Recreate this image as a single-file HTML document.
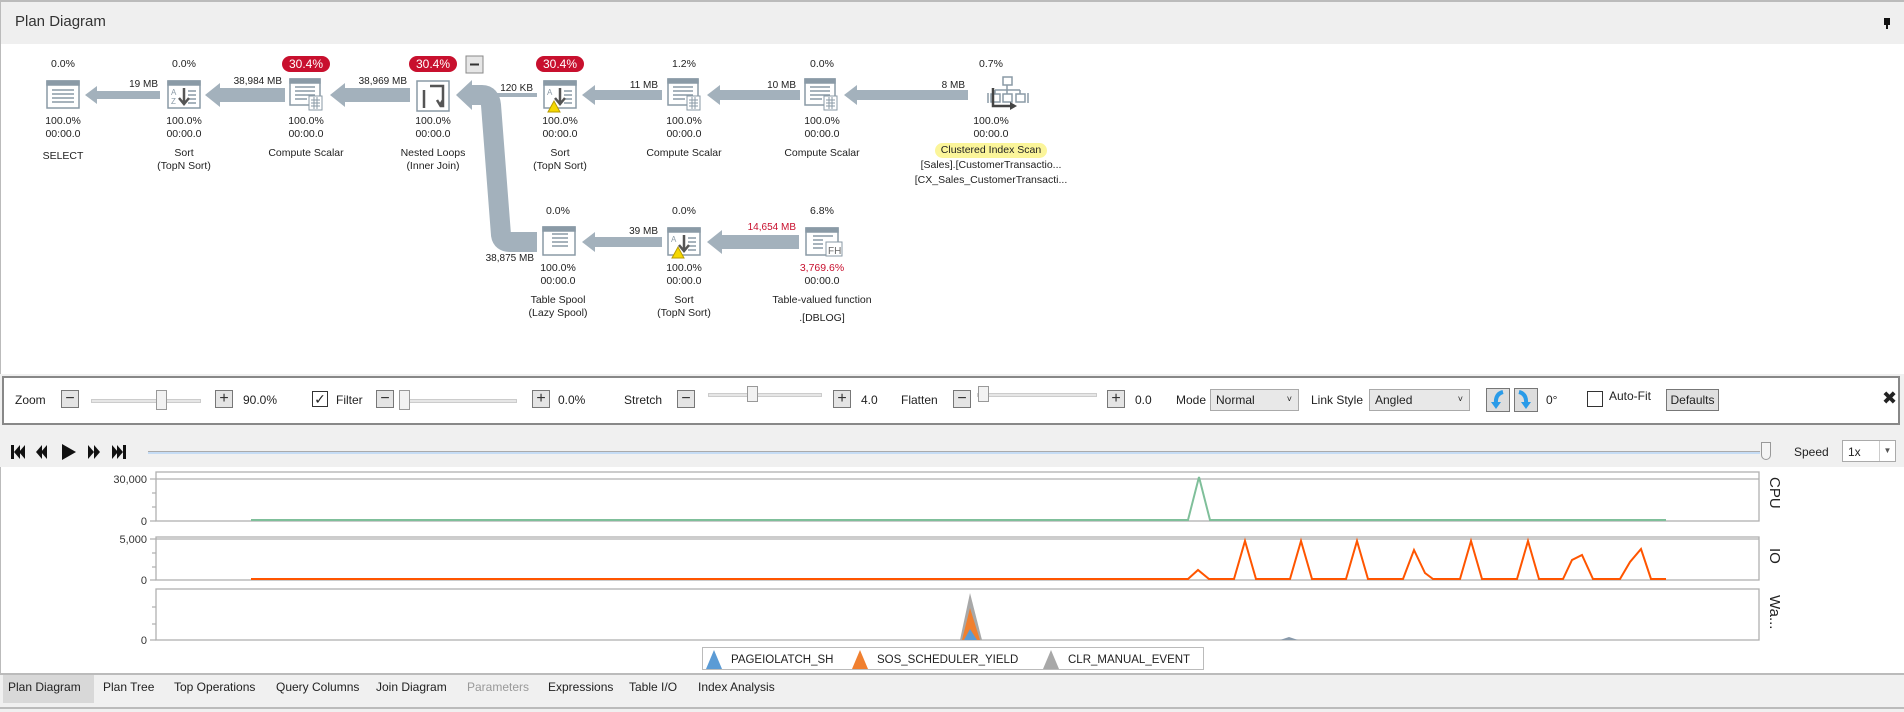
<!DOCTYPE html>
<html><head><meta charset="utf-8"><style>
*{margin:0;padding:0;box-sizing:border-box}
body{width:1904px;height:712px;overflow:hidden;background:#f0f0f0;font-family:"Liberation Sans","DejaVu Sans",sans-serif;font-size:11px;color:#222;position:relative}
.a{position:absolute;white-space:nowrap}
.c{position:absolute;text-align:center;width:160px;white-space:nowrap;line-height:13px;font-size:10.5px}
.pill{display:inline-block;background:#c8102e;color:#fff;border-radius:9px;padding:0 7px;font-size:12px;line-height:16px}
.btn{position:absolute;width:18px;height:18px;border:1px solid #777;background:#e4e4e4;font-size:16px;line-height:15px;text-align:center;color:#333}
.trk{position:absolute;height:4px;background:#e6e6e6;border:1px solid #ccc}
.thumb{position:absolute;width:11px;height:20px;background:#f2f2f2;border:1px solid #999}
.sel{position:absolute;height:22px;border:1px solid #aaa;background:#e8e8e8;font-size:12px;padding:3px 5px}
.tab{position:absolute;top:680px;font-size:12px}
</style></head><body>
<div class="a" style="left:0;top:0;width:1904px;height:44px;background:#efefef;border-top:2px solid #bbb;border-left:1px solid #bbb"></div>
<div class="a" style="left:15px;top:13px;font-size:15px;color:#333">Plan Diagram</div>
<div class="a" style="left:1884px;top:18px;width:6px;height:7px;background:#111"></div>
<div class="a" style="left:1886px;top:25px;width:2px;height:4px;background:#111"></div>
<div class="a" style="left:0;top:44px;width:1904px;height:330px;background:#fff;border-left:1px solid #bbb"></div>

<svg class="a" style="left:0;top:0" width="1904" height="374">
<g fill="#a3b1bc">
<polygon points="85,95 97,86 97,91 160,91 160,99 97,99 97,104"/>
<polygon points="205,95 220,83 220,88 285,88 285,102 220,102 220,107"/>
<polygon points="330,95 345,83 345,88 410,88 410,102 345,102 345,107"/>
<polygon points="486,95 490,93 537,93 537,97 490,97"/>
<polygon points="582,95 595,85 595,90 662,90 662,100 595,100 595,105"/>
<polygon points="707,95 720,85 720,90 800,90 800,100 720,100 720,105"/>
<polygon points="844,95 857,85 857,90 968,90 968,100 857,100 857,105"/>
<polygon points="582,242 595,232 595,237 662,237 662,247 595,247 595,252"/>
<polygon points="707,242 722,230 722,235 799,235 799,249 722,249 722,254"/>
<polygon points="456,95 472,80 472,110"/>
</g>
<path d="M470 95 L482 95 Q490 95 491 105 L501 235 Q502 242 510 242 L537 242" fill="none" stroke="#a3b1bc" stroke-width="20" stroke-linejoin="round"/>
<g fill="none" stroke="#8a9aa6" stroke-width="1.5">
<rect x="47" y="81" width="32" height="27" fill="#fff"/><rect x="47" y="81" width="32" height="4" fill="#8a9aa6"/>
<rect x="168" y="81" width="32" height="27" fill="#fff"/><rect x="168" y="81" width="32" height="4" fill="#8a9aa6"/>
<rect x="290" y="79" width="30" height="26" fill="#fff"/><rect x="290" y="79" width="30" height="4" fill="#8a9aa6"/>
<rect x="417" y="81" width="32" height="30" fill="#fff"/>
<rect x="544" y="81" width="32" height="27" fill="#fff"/><rect x="544" y="81" width="32" height="4" fill="#8a9aa6"/>
<rect x="668" y="79" width="30" height="26" fill="#fff"/><rect x="668" y="79" width="30" height="4" fill="#8a9aa6"/>
<rect x="805" y="79" width="30" height="26" fill="#fff"/><rect x="805" y="79" width="30" height="4" fill="#8a9aa6"/>
<rect x="543" y="227" width="32" height="28" fill="#fff"/><rect x="543" y="227" width="32" height="4" fill="#8a9aa6"/>
<rect x="668" y="228" width="32" height="27" fill="#fff"/><rect x="668" y="228" width="32" height="4" fill="#8a9aa6"/>
<rect x="806" y="228" width="32" height="27" fill="#fff"/><rect x="806" y="228" width="32" height="4" fill="#8a9aa6"/>
</g>
<g stroke="#8a9aa6" stroke-width="1.5">
<path d="M52 90h22M52 94h22M52 98h22M52 102h22"/>
<path d="M188 91h8M188 95h8M188 99h8M188 103h8M564 91h8M564 95h8M564 99h8M564 103h8M688 238h8M688 242h8M688 246h8M688 250h8"/>
<path d="M295 87h20M295 91h20M295 95h20M295 99h12"/><path d="M673 87h20M673 91h20M673 95h20M673 99h12"/><path d="M810 87h20M810 91h20M810 95h20M810 99h12"/>
<path d="M813 236h20M813 240h10M813 244h10M813 248h10"/>
<path d="M552 234h16M552 238h16M552 242h16M552 246h16"/>
</g>
<g font-family="Liberation Sans" font-size="8" fill="#8a9aa6"><text x="171" y="95">A</text><text x="171" y="104">Z</text><text x="547" y="95">A</text><text x="671" y="242">A</text></g>
<g fill="#fff" stroke="#8a9aa6"><rect x="309" y="96" width="13" height="14"/><rect x="687" y="96" width="13" height="14"/><rect x="824" y="96" width="13" height="14"/><rect x="826" y="242" width="16" height="14"/></g>
<g stroke="#8a9aa6" stroke-width="1"><path d="M311 100h9M311 103h9M311 106h9M314 97v12M317 97v12M689 100h9M689 103h9M689 106h9M692 97v12M695 97v12M826 100h9M826 103h9M826 106h9M829 97v12M832 97v12"/></g>
<text x="828" y="254" font-size="10" fill="#666" font-family="Liberation Sans">FH</text>
<g stroke="#555" stroke-width="2.5" fill="none">
<path d="M184 88v14M179 98l5 6 5-6M560 88v14M555 98l5 6 5-6M684 235v14M679 245l5 6 5-6"/>
<path d="M424 90v18M430 86h13v20h-3M437 100l3 5 3-5"/>
</g>
<g fill="none" stroke="#8a9aa6" stroke-width="1.5">
<rect x="1003" y="77" width="9" height="8"/>
<path d="M1007 85v5M995 90h25M995 90v4M1007 90v4M1020 90v4"/>
<rect x="991" y="94" width="9" height="8"/><rect x="1003" y="94" width="9" height="8"/><rect x="1016" y="94" width="9" height="8"/>
<path d="M988 93v10M1028 93v10"/>
</g>
<path d="M993 88v18h18" fill="none" stroke="#444" stroke-width="2.5"/><polygon points="1010,102 1017,106 1010,110" fill="#444"/>
<g fill="#f5d800" stroke="#b89b00"><path d="M548 112l6-11 6 11z"/><path d="M672 258l6-11 6 11z"/></g>
<rect x="466" y="56" width="17" height="17" fill="#e6e6e6" stroke="#888"/><path d="M470 64.5h9" stroke="#333" stroke-width="2"/>
</svg>

<div class="a" style="right:1746px;top:79px;font-size:10px">19 MB</div>
<div class="a" style="right:1622px;top:76px;font-size:10px">38,984 MB</div>
<div class="a" style="right:1497px;top:76px;font-size:10px">38,969 MB</div>
<div class="a" style="right:1371px;top:83px;font-size:10px">120 KB</div>
<div class="a" style="right:1246px;top:80px;font-size:10px">11 MB</div>
<div class="a" style="right:1108px;top:80px;font-size:10px">10 MB</div>
<div class="a" style="right:939px;top:80px;font-size:10px">8 MB</div>
<div class="a" style="right:1246px;top:226px;font-size:10px">39 MB</div>
<div class="a" style="right:1108px;top:222px;font-size:10px;color:#c8102e">14,654 MB</div>
<div class="a" style="right:1370px;top:253px;font-size:10px">38,875 MB</div>

<div class="c" style="left:-17px;top:58px">0.0%</div>
<div class="c" style="left:104px;top:58px">0.0%</div>
<div class="c" style="left:226px;top:56px"><span class="pill">30.4%</span></div>
<div class="c" style="left:353px;top:56px"><span class="pill">30.4%</span></div>
<div class="c" style="left:480px;top:56px"><span class="pill">30.4%</span></div>
<div class="c" style="left:604px;top:58px">1.2%</div>
<div class="c" style="left:742px;top:58px">0.0%</div>
<div class="c" style="left:911px;top:58px">0.7%</div>
<div class="c" style="left:478px;top:205px">0.0%</div>
<div class="c" style="left:604px;top:205px">0.0%</div>
<div class="c" style="left:742px;top:205px">6.8%</div>

<div class="c" style="left:-17px;top:115px">100.0%<br>00:00.0<br><span style="line-height:30px">SELECT</span></div>
<div class="c" style="left:104px;top:115px">100.0%<br>00:00.0<br><span style="display:block;margin-top:6px">Sort<br>(TopN Sort)</span></div>
<div class="c" style="left:226px;top:115px">100.0%<br>00:00.0<br><span style="display:block;margin-top:6px">Compute Scalar</span></div>
<div class="c" style="left:353px;top:115px">100.0%<br>00:00.0<br><span style="display:block;margin-top:6px">Nested Loops<br>(Inner Join)</span></div>
<div class="c" style="left:480px;top:115px">100.0%<br>00:00.0<br><span style="display:block;margin-top:6px">Sort<br>(TopN Sort)</span></div>
<div class="c" style="left:604px;top:115px">100.0%<br>00:00.0<br><span style="display:block;margin-top:6px">Compute Scalar</span></div>
<div class="c" style="left:742px;top:115px">100.0%<br>00:00.0<br><span style="display:block;margin-top:6px">Compute Scalar</span></div>
<div class="c" style="left:891px;top:115px;width:200px">100.0%<br>00:00.0<br><span style="display:inline-block;margin-top:2px;background:#fbf59a;border-radius:8px;padding:1px 6px">Clustered Index Scan</span><br><span style="line-height:15px">[Sales].[CustomerTransactio...<br>[CX_Sales_CustomerTransacti...</span></div>
<div class="c" style="left:478px;top:262px">100.0%<br>00:00.0<br><span style="display:block;margin-top:6px">Table Spool<br>(Lazy Spool)</span></div>
<div class="c" style="left:604px;top:262px">100.0%<br>00:00.0<br><span style="display:block;margin-top:6px">Sort<br>(TopN Sort)</span></div>
<div class="c" style="left:742px;top:262px"><span style="color:#c8102e">3,769.6%</span><br>00:00.0<br><span style="display:block;margin-top:6px">Table-valued function</span><span style="display:block;margin-top:5px">.[DBLOG]</span></div>

<div class="a" style="left:2px;top:376px;width:1898px;height:49px;background:#fff;border:2px solid #888"></div>
<div class="a" style="left:15px;top:393px;font-size:12px">Zoom</div>
<div class="btn" style="left:61px;top:390px">−</div>
<div class="trk" style="left:91px;top:399px;width:110px"></div><div class="thumb" style="left:156px;top:390px"></div>
<div class="btn" style="left:215px;top:390px">+</div>
<div class="a" style="left:243px;top:393px;font-size:12px">90.0%</div>
<div class="a" style="left:312px;top:391px;width:16px;height:16px;border:1px solid #333;background:#fff;font-size:14px;line-height:14px;text-align:center">✓</div>
<div class="a" style="left:336px;top:393px;font-size:12px">Filter</div>
<div class="btn" style="left:376px;top:390px">−</div>
<div class="trk" style="left:401px;top:399px;width:116px"></div><div class="thumb" style="left:399px;top:390px"></div>
<div class="btn" style="left:532px;top:390px">+</div>
<div class="a" style="left:558px;top:393px;font-size:12px">0.0%</div>
<div class="a" style="left:624px;top:393px;font-size:12px">Stretch</div>
<div class="btn" style="left:677px;top:390px">−</div>
<div class="trk" style="left:708px;top:393px;width:114px"></div><div class="thumb" style="left:747px;top:386px;height:16px"></div>
<div class="btn" style="left:833px;top:390px">+</div>
<div class="a" style="left:861px;top:393px;font-size:12px">4.0</div>
<div class="a" style="left:901px;top:393px;font-size:12px">Flatten</div>
<div class="btn" style="left:953px;top:390px">−</div>
<div class="trk" style="left:977px;top:393px;width:120px"></div><div class="thumb" style="left:978px;top:386px;height:16px"></div>
<div class="btn" style="left:1107px;top:390px">+</div>
<div class="a" style="left:1135px;top:393px;font-size:12px">0.0</div>
<div class="a" style="left:1176px;top:393px;font-size:12px">Mode</div>
<div class="sel" style="left:1210px;top:389px;width:89px">Normal<span style="position:absolute;right:6px;font-size:9px;top:4px">˅</span></div>
<div class="a" style="left:1311px;top:393px;font-size:12px">Link Style</div>
<div class="sel" style="left:1369px;top:389px;width:101px">Angled<span style="position:absolute;right:6px;font-size:9px;top:4px">˅</span></div>
<svg class="a" style="left:1486px;top:388px" width="54" height="25">
<rect x="0.5" y="0.5" width="23" height="23" fill="#ddd" stroke="#777"/><rect x="28.5" y="0.5" width="23" height="23" fill="#ddd" stroke="#777"/>
<path d="M17 4 Q9 6 10 16" fill="none" stroke="#2a9be8" stroke-width="4"/><polygon points="5,14 15,14 10,21" fill="#2a9be8"/>
<path d="M33 4 Q41 6 40 16" fill="none" stroke="#2a9be8" stroke-width="4"/><polygon points="35,14 45,14 40,21" fill="#2a9be8"/>
</svg>
<div class="a" style="left:1546px;top:393px;font-size:12px">0°</div>
<div class="a" style="left:1587px;top:391px;width:16px;height:16px;border:1px solid #333;background:#fff"></div>
<div class="a" style="left:1609px;top:389px;font-size:12px">Auto-Fit</div>
<div class="a" style="left:1666px;top:389px;width:53px;height:22px;border:1px solid #777;background:#e0e0e0;font-size:12px;line-height:20px;text-align:center">Defaults</div>
<div class="a" style="left:1882px;top:388px;font-size:18px;font-weight:bold">✖</div>

<svg class="a" style="left:10px;top:442px" width="125" height="20" fill="#111">
<rect x="1" y="3" width="3" height="14"/><polygon points="4,10 10,3 10,17"/><polygon points="9,10 15,3 15,17"/>
<polygon points="26,10 32,3 32,17"/><polygon points="31,10 37,3 37,17"/>
<polygon points="52,2 66,10 52,18"/>
<polygon points="78,3 84,10 78,17"/><polygon points="84,3 90,10 84,17"/>
<polygon points="102,3 108,10 102,17"/><polygon points="107,3 113,10 107,17"/><rect x="113" y="3" width="3" height="14"/>
</svg>
<div class="a" style="left:148px;top:451px;width:1612px;height:3px;background:#c5dcf5;border-top:1px solid #aaa"></div>
<div class="a" style="left:1761px;top:442px;width:10px;height:18px;background:#f4f4f4;border:1px solid #999;border-radius:0 0 5px 5px"></div>
<div class="a" style="left:1794px;top:445px;font-size:12px">Speed</div>
<div class="a" style="left:1842px;top:440px;width:54px;height:22px;border:1px solid #aaa;background:#fff;font-size:12px;padding:4px 5px">1x<span style="position:absolute;right:0;top:0;width:16px;height:20px;border-left:1px solid #ccc;font-size:8px;text-align:center;line-height:20px;color:#555">▼</span></div>

<div class="a" style="left:0;top:467px;width:1904px;height:206px;background:#fff;border-left:1px solid #bbb"></div>
<svg class="a" style="left:0;top:467px" width="1904" height="206">
<g fill="none" stroke="#b0b0b0" stroke-width="1.3">
<rect x="156" y="5" width="1603" height="49"/><line x1="156" y1="12" x2="1759" y2="12"/>
<rect x="156" y="70" width="1603" height="43"/><line x1="156" y1="72" x2="1759" y2="72"/>
<rect x="156" y="122" width="1603" height="51"/>
<path d="M150 12h6M152 26h4M152 40h4M150 54h6M150 72h6M152 86h4M152 100h4M150 113h6M152 140h4M152 157h4M150 173h6"/>
</g>
<g font-family="Liberation Sans" font-size="11" fill="#333" text-anchor="end">
<text x="147" y="16">30,000</text><text x="147" y="58">0</text><text x="147" y="76">5,000</text><text x="147" y="117">0</text><text x="147" y="177">0</text>
</g>
<g font-family="Liberation Sans" font-size="15" fill="#222">
<text transform="translate(1770,10) rotate(90)">CPU</text>
<text transform="translate(1770,81) rotate(90)">IO</text>
<text transform="translate(1770,128) rotate(90)">Wa...</text>
</g>
<polyline fill="none" stroke="#7fbf9a" stroke-width="2" points="251,53 1188,53 1199,10 1210,53 1666,53"/>
<polyline fill="none" stroke="#ff5500" stroke-width="2" points="251,112 1188,112 1198,103 1209,112 1234,112 1245,74 1256,112 1290,112 1301,74 1312,112 1346,112 1357,74 1368,112 1403,112 1414,83 1425,106 1433,112 1460,112 1471,74 1482,112 1517,112 1528,74 1539,112 1563,112 1572,93 1582,88 1593,112 1620,112 1630,95 1641,82 1651,112 1666,112"/>
<polygon points="960,173 970,126 982,173" fill="#a8a8a8"/>
<polygon points="962,173 970,141 980,173" fill="#f08030"/>
<polygon points="964,173 970,162 977,173" fill="#5b9bd5"/>
<polygon points="1280,173 1289,170 1298,173" fill="#8899aa"/>
</svg>
<div class="a" style="left:702px;top:647px;width:502px;height:23px;background:#fff;border:1px solid #bbb"></div>
<svg class="a" style="left:702px;top:647px" width="502" height="23">
<polygon points="4,22 12,3 20,22" fill="#5b9bd5"/><polygon points="150,22 158,3 166,22" fill="#f08030"/><polygon points="341,22 349,3 357,22" fill="#a8a8a8"/>
<g font-family="Liberation Sans" font-size="11.5" fill="#222"><text x="29" y="16">PAGEIOLATCH_SH</text><text x="175" y="16">SOS_SCHEDULER_YIELD</text><text x="366" y="16">CLR_MANUAL_EVENT</text></g>
</svg>

<div class="a" style="left:0;top:673px;width:1904px;height:2px;background:#bbb"></div>
<div class="a" style="left:3px;top:675px;width:91px;height:28px;background:#d8d8d8"></div>
<div class="tab" style="left:8px">Plan Diagram</div>
<div class="tab" style="left:103px">Plan Tree</div>
<div class="tab" style="left:174px">Top Operations</div>
<div class="tab" style="left:276px">Query Columns</div>
<div class="tab" style="left:376px">Join Diagram</div>
<div class="tab" style="left:467px;color:#999">Parameters</div>
<div class="tab" style="left:548px">Expressions</div>
<div class="tab" style="left:629px">Table I/O</div>
<div class="tab" style="left:698px">Index Analysis</div>
<div class="a" style="left:0;top:707px;width:1904px;height:2px;background:#bbb"></div>
</body></html>
